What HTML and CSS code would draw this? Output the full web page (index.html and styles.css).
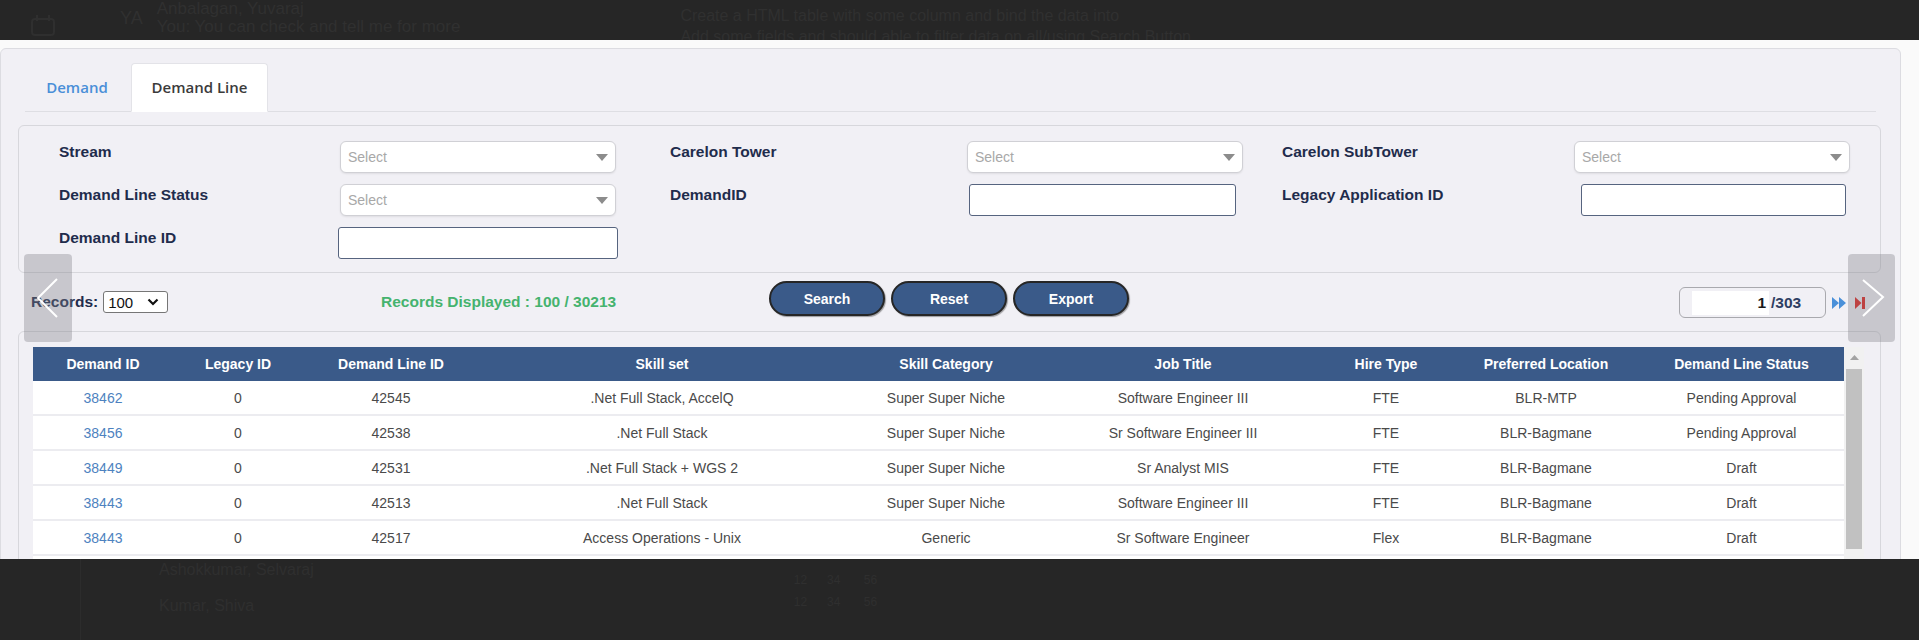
FILE: index.html
```html
<!DOCTYPE html>
<html lang="en">
<head>
<meta charset="utf-8">
<title>Demand Line</title>
<link rel="stylesheet" href="styles.css">
</head>
<body>
<div class="top-band">
  <div class="bg-icon"><svg width="26" height="22" viewBox="0 0 26 22"><rect x="2" y="5" width="22" height="16" rx="3" fill="none" stroke="#2f2f2f" stroke-width="2"/><path d="M7 1v6M19 1v6" stroke="#2f2f2f" stroke-width="2"/></svg></div>
  <div class="bg-initials">YA</div>
  <div class="bg-chat">
    <div>Anbalagan, Yuvaraj</div>
    <div>You: You can check and tell me for more</div>
  </div>
  <div class="bg-msg">
    <div>Create a HTML table with some column and bind the data into</div>
    <div>Add some fields and should able to filter data on all/using Search Button</div>
  </div>
</div>

<div class="stage">
  <div class="panel">
    <ul class="tabs">
      <li class="tab">Demand</li>
      <li class="tab active">Demand Line</li>
    </ul>

    <div class="filters">
      <div class="flabel">Stream</div>
      <div class="select"><span>Select</span><svg width="12" height="7" viewBox="0 0 12 7"><path d="M0 0H12L6 7Z" fill="#8c8c8c"/></svg></div>
      <div class="flabel">Carelon Tower</div>
      <div class="select"><span>Select</span><svg width="12" height="7" viewBox="0 0 12 7"><path d="M0 0H12L6 7Z" fill="#8c8c8c"/></svg></div>
      <div class="flabel">Carelon SubTower</div>
      <div class="select"><span>Select</span><svg width="12" height="7" viewBox="0 0 12 7"><path d="M0 0H12L6 7Z" fill="#8c8c8c"/></svg></div>

      <div class="flabel">Demand Line Status</div>
      <div class="select"><span>Select</span><svg width="12" height="7" viewBox="0 0 12 7"><path d="M0 0H12L6 7Z" fill="#8c8c8c"/></svg></div>
      <div class="flabel">DemandID</div>
      <div class="text-input ti-demand"></div>
      <div class="flabel">Legacy Application ID</div>
      <div class="text-input ti-legacy"></div>

      <div class="flabel">Demand Line ID</div>
      <div class="text-input ti-line"></div>
    </div>

    <div class="controls">
      <div class="records">
        <span class="records-label">Records:</span>
        <div class="rec-select"><span>100</span><svg width="12" height="8" viewBox="0 0 12 8"><path d="M1.5 1.5L6 6L10.5 1.5" fill="none" stroke="#111" stroke-width="2.2"/></svg></div>
      </div>
      <div class="displayed">Records Displayed : 100 / 30213</div>
      <div class="buttons">
        <div class="btn">Search</div>
        <div class="btn">Reset</div>
        <div class="btn">Export</div>
      </div>
      <div class="pager">
        <div class="pager-box">
          <div class="page-input">1</div>
          <span class="page-total">/303</span>
        </div>
        <svg class="pg-next" width="15" height="12" viewBox="0 0 15 12"><path d="M0 0L7 6L0 12Z M7 0L14 6L7 12Z" fill="#4a90d9"/></svg>
        <svg class="pg-last" width="11" height="12" viewBox="0 0 11 12"><path d="M0 0L6.5 6L0 12Z" fill="#e0201c"/><rect x="7" y="0" width="3" height="12" fill="#e0201c"/></svg>
      </div>
    </div>

    <div class="grid-box">
      <div class="table-wrap">
        <table class="data">
          <colgroup>
            <col style="width:140px"><col style="width:130px"><col style="width:176px"><col style="width:366px"><col style="width:202px"><col style="width:272px"><col style="width:134px"><col style="width:186px"><col style="width:205px">
          </colgroup>
          <thead>
            <tr><th>Demand ID</th><th>Legacy ID</th><th>Demand Line ID</th><th>Skill set</th><th>Skill Category</th><th>Job Title</th><th>Hire Type</th><th>Preferred Location</th><th>Demand Line Status</th></tr>
          </thead>
          <tbody>
            <tr><td class="link">38462</td><td>0</td><td>42545</td><td>.Net Full Stack, AccelQ</td><td>Super Super Niche</td><td>Software Engineer III</td><td>FTE</td><td>BLR-MTP</td><td>Pending Approval</td></tr>
            <tr><td class="link">38456</td><td>0</td><td>42538</td><td>.Net Full Stack</td><td>Super Super Niche</td><td>Sr Software Engineer III</td><td>FTE</td><td>BLR-Bagmane</td><td>Pending Approval</td></tr>
            <tr><td class="link">38449</td><td>0</td><td>42531</td><td>.Net Full Stack + WGS 2</td><td>Super Super Niche</td><td>Sr Analyst MIS</td><td>FTE</td><td>BLR-Bagmane</td><td>Draft</td></tr>
            <tr><td class="link">38443</td><td>0</td><td>42513</td><td>.Net Full Stack</td><td>Super Super Niche</td><td>Software Engineer III</td><td>FTE</td><td>BLR-Bagmane</td><td>Draft</td></tr>
            <tr><td class="link">38443</td><td>0</td><td>42517</td><td>Access Operations - Unix</td><td>Generic</td><td>Sr Software Engineer</td><td>Flex</td><td>BLR-Bagmane</td><td>Draft</td></tr>
            <tr class="empty"><td></td><td></td><td></td><td></td><td></td><td></td><td></td><td></td><td></td></tr>
          </tbody>
        </table>
        <div class="scrollbar">
          <svg class="sb-up" width="9" height="5" viewBox="0 0 9 5"><path d="M0 5L4.5 0L9 5Z" fill="#a3a3a3"/></svg>
          <div class="sb-thumb"></div>
        </div>
      </div>
    </div>
  </div>

  <div class="nav nav-left"><svg width="48" height="88" viewBox="0 0 48 88"><polyline points="33,25 14,44 33,63" fill="none" stroke="#fff" stroke-width="2"/></svg></div>
  <div class="nav nav-right"><svg width="47" height="88" viewBox="0 0 47 88"><polyline points="15,26 35,43 15,62" fill="none" stroke="#fff" stroke-width="2"/></svg></div>
</div>

<div class="bottom-band">
  <div class="bb-line"></div>
  <div class="bb-col">
    <div class="bb-name">Ashokkumar, Selvaraj</div>
    <div class="bb-name2">Kumar, Shiva</div>
  </div>
  <div class="bb-nums">
    <div>12 &nbsp;&nbsp;&nbsp;&nbsp; 34 &nbsp;&nbsp;&nbsp;&nbsp;&nbsp; 56</div>
    <div>12 &nbsp;&nbsp;&nbsp;&nbsp; 34 &nbsp;&nbsp;&nbsp;&nbsp;&nbsp; 56</div>
  </div>
</div>
</body>
</html>
```

FILE: styles.css
```css
html, body {
  margin: 0;
  padding: 0;
}
body {
  width: 1919px;
  height: 640px;
  overflow: hidden;
  background: #262626;
  font-family: "Liberation Sans", Arial, sans-serif;
}

/* ---------- dimmed background bands ---------- */
.top-band {
  height: 40px;
  background: #262626;
  display: flex;
  overflow: hidden;
  color: #303030;
  font-family: "Liberation Sans", Arial, sans-serif;
}
.bg-icon {
  margin: 14px 0 0 30px;
}
.bg-initials {
  margin: 8px 0 0 64px;
  font-size: 18px;
}
.bg-chat {
  margin: 0 0 0 14px;
  font-size: 17px;
  line-height: 18px;
}
.bg-msg {
  margin: 5px 0 0 220px;
  font-size: 16px;
  line-height: 21px;
}
.bottom-band {
  height: 81px;
  background: #262626;
  display: flex;
  color: #2f2f2f;
  font-size: 16px;
  overflow: hidden;
}
.bb-line {
  width: 1px;
  background: #2c2c2c;
  margin-left: 80px;
}
.bb-col {
  margin: 2px 0 0 78px;
}
.bb-name2 {
  margin-top: 18px;
}
.bb-nums {
  margin: 10px 0 0 480px;
  font-size: 12px;
  line-height: 22px;
}

/* ---------- stage ---------- */
.stage {
  position: relative;
  height: 519px;
  overflow: hidden;
  background: #fafafa;
}
.panel {
  margin-top: 8px;
  width: 1901px;
  min-height: 600px;
  box-sizing: border-box;
  border: 1px solid #dcdce1;
  border-radius: 6px 6px 0 0;
  background: #f1f0f5;
}

/* ---------- tabs ---------- */
.tabs {
  list-style: none;
  margin: 14px 24px 0 24px;
  padding: 0;
  display: flex;
  border-bottom: 1px solid #dedee3;
  height: 48px;
}
.tab {
  font-family: "Open Sans", "Liberation Sans", sans-serif;
  font-weight: 600;
  font-size: 15px;
  color: #4a8fd8;
  width: 104px;
  text-align: center;
  line-height: 47px;
  height: 49px;
  box-sizing: border-box;
  border: 1px solid transparent;
}
.tab.active {
  margin-left: 2px;
  width: 137px;
  background: #fff;
  color: #3b3b3b;
  border-color: #e3e3e8;
  border-bottom-color: #fff;
  border-radius: 4px 4px 0 0;
}

/* ---------- filter box ---------- */
.filters {
  margin: 13px 19px 0 17px;
  border: 1px solid #d7d7dc;
  border-radius: 6px;
  padding: 15px 0 13px 40px;
  display: grid;
  grid-template-columns: 281px 330px 297px 315px 292px 275px;
  grid-template-rows: 32px 32px 32px;
  row-gap: 11px;
}
.flabel {
  font-weight: bold;
  font-size: 15.5px;
  color: #1f2c4c;
  line-height: 21px;
  align-self: start;
}
.select {
  width: 276px;
  height: 32px;
  box-sizing: border-box;
  border: 1px solid #d0d0d5;
  border-radius: 6px;
  background: #fff;
  display: flex;
  align-items: center;
  justify-content: space-between;
  padding: 0 7px 0 7px;
  color: #a8a8a8;
  font-size: 14px;
  box-shadow: 0 1px 2px rgba(0, 0, 0, 0.08);
}
.text-input {
  height: 32px;
  box-sizing: border-box;
  border: 1px solid #56647f;
  border-radius: 3px;
  background: #fff;
}
.ti-demand {
  margin-left: 2px;
  width: 267px;
}
.ti-legacy {
  margin-left: 7px;
  width: 265px;
}
.ti-line {
  margin-left: -2px;
  width: 280px;
}

/* ---------- controls row ---------- */
.controls {
  margin-top: 8px;
  height: 37px;
  padding-left: 30px;
  display: grid;
  grid-template-columns: 350px 388px 910px 1fr;
  align-items: start;
}
.records {
  display: flex;
  align-items: center;
  margin-top: 10px;
}
.records-label {
  font-weight: bold;
  font-size: 15.5px;
  color: #1f2c4c;
  line-height: 22px;
}
.rec-select {
  margin-left: 5px;
  width: 65px;
  height: 22px;
  box-sizing: border-box;
  border: 1px solid #767676;
  border-radius: 3px;
  background: #fff;
  display: flex;
  align-items: center;
  justify-content: space-between;
  padding: 0 8px 0 4px;
  font-size: 15px;
  color: #111;
}
.displayed {
  margin-top: 10px;
  font-weight: bold;
  font-size: 15.5px;
  line-height: 22px;
  color: #45b36e;
}
.buttons {
  display: flex;
  gap: 6px;
}
.btn {
  width: 116px;
  height: 35px;
  box-sizing: border-box;
  border: 2px solid #262626;
  border-radius: 18px;
  background: #3a5a89;
  color: #fff;
  font-weight: bold;
  font-size: 14px;
  display: flex;
  align-items: center;
  justify-content: center;
  box-shadow: 1px 1px 1px rgba(0, 0, 0, 0.35);
}
.pager {
  display: flex;
  align-items: center;
  margin-top: 6px;
}
.pager-box {
  width: 147px;
  height: 31px;
  box-sizing: border-box;
  border: 1px solid #a9a9ae;
  border-radius: 6px;
  display: flex;
  align-items: center;
  padding-left: 12px;
}
.page-input {
  width: 77px;
  height: 24px;
  box-sizing: border-box;
  background: #fff;
  text-align: right;
  padding-right: 3px;
  font-weight: bold;
  font-size: 15.5px;
  line-height: 24px;
  color: #1a1a1a;
}
.page-total {
  margin-left: 2px;
  font-weight: bold;
  font-size: 15.5px;
  color: #2e3e62;
}
.pg-next {
  margin-left: 6px;
}
.pg-last {
  margin-left: 8px;
}

/* ---------- table ---------- */
.grid-box {
  margin: 13px 19px 0 17px;
  border: 1px solid #d7d7dc;
  border-radius: 6px;
  padding: 15px 14px 0 14px;
  height: 300px;
}
.table-wrap {
  display: flex;
  align-items: flex-start;
}
.data {
  width: 1811px;
  table-layout: fixed;
  border-collapse: collapse;
  background: #fff;
}
.data th {
  height: 34px;
  padding: 0;
  background: #3a5a89;
  color: #fff;
  font-weight: bold;
  font-size: 14px;
  text-align: center;
}
.data td {
  height: 33px;
  padding: 0;
  text-align: center;
  font-size: 14px;
  color: #4a4a4a;
  border-bottom: 2px solid #ececf0;
}
.data td.link {
  color: #4d82c0;
}
.scrollbar {
  width: 20px;
  height: 220px;
  background: #f1f1f1;
  display: flex;
  flex-direction: column;
  align-items: center;
}
.sb-up {
  margin-top: 8px;
}
.sb-thumb {
  margin-top: 9px;
  width: 16px;
  height: 180px;
  background: #c1c1c1;
}

/* ---------- carousel overlays ---------- */
.nav {
  position: absolute;
  top: 214px;
  height: 88px;
  background: rgba(128, 128, 136, 0.36);
  border-radius: 4px;
}
.nav svg {
  display: block;
}
.nav-left {
  left: 24px;
  width: 48px;
}
.nav-right {
  left: 1848px;
  width: 47px;
}
```
